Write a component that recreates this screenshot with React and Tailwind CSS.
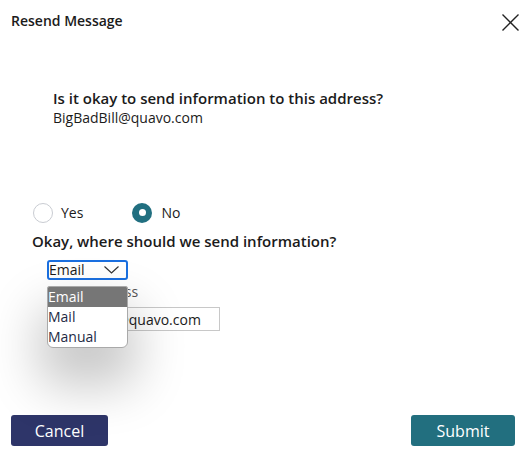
export default function App() {
  return (
    <div className="relative flex h-[452px] w-[527px] flex-col bg-white text-[#1b1b1b] font-['Open_Sans',sans-serif]">
      <div className="flex items-start justify-between pl-[11px] pr-[8px] pt-[11px]">
        <h1 className="text-[14px] font-semibold leading-[20px]">Resend Message</h1>
        <button className="mt-[3px] text-[#222]">
          <svg width="17" height="17" viewBox="0 0 17 17" fill="none" stroke="currentColor" strokeWidth="1.4">
            <path d="M0.5 0.5 16.5 16.5M16.5 0.5 0.5 16.5" />
          </svg>
        </button>
      </div>

      <div className="mt-[57px] pl-[53px]">
        <p className="text-[15px] font-semibold leading-[20px]">Is it okay to send information to this address?</p>
        <p className="text-[14px] leading-[19px]">BigBadBill@quavo.com</p>
      </div>

      <div className="mt-[75px] flex items-center pl-[33px]">
        <label className="flex items-center gap-[8px]">
          <span className="h-[20px] w-[20px] rounded-full border border-[#c9ccd2]" />
          <span className="text-[14px]">Yes</span>
        </label>
        <label className="ml-[49px] flex items-center gap-[9px]">
          <span className="flex h-[20px] w-[20px] items-center justify-center rounded-full bg-[#216f80]">
            <span className="h-[7px] w-[7px] rounded-full bg-white" />
          </span>
          <span className="text-[14px]">No</span>
        </label>
      </div>

      <p className="mt-[8px] pl-[32px] text-[15px] font-semibold leading-[20px]">Okay, where should we send information?</p>

      <div className="relative mt-[9px] pl-[47px]">
        <div className="flex h-[20px] w-[81px] items-center justify-between rounded-[3px] border-2 border-[#1a6fe0] pr-[7px]">
          <span className="text-[14px] leading-none">Email</span>
          <svg width="15" height="8" viewBox="0 0 15 8" fill="none" stroke="#333" strokeWidth="1.2">
            <path d="M0.5 0.5 7.5 7 14.5 0.5" />
          </svg>
        </div>
        <p className="mt-[2px] text-[14px] leading-[20px] text-[#555]">Email address</p>
        <div className="mt-[5px] flex h-[24px] w-[173px] items-center border border-[#c8c8c8] px-[3px] text-[14px]">
          BigBadBill@quavo.com
        </div>

        <ul className="absolute left-[47px] top-[26px] w-[81px] overflow-hidden rounded-b-[6px] rounded-t-[2px] border border-[#a9a9a9] bg-white text-[14px] leading-[20px] text-[#1d2a44] shadow-[0_30px_50px_8px_rgba(0,0,0,0.22)]">
          <li className="bg-[#767676] text-white">Email</li>
          <li>Mail</li>
          <li>Manual</li>
        </ul>
      </div>

      <div className="mt-auto flex justify-between pb-[6px] pl-[11px] pr-[12px]">
        <button className="h-[31px] w-[97px] rounded-[3px] bg-[#2e3569] text-[16px] text-white">Cancel</button>
        <button className="h-[31px] w-[104px] rounded-[3px] bg-[#226f7f] text-[16px] text-white">Submit</button>
      </div>
    </div>
  );
}
